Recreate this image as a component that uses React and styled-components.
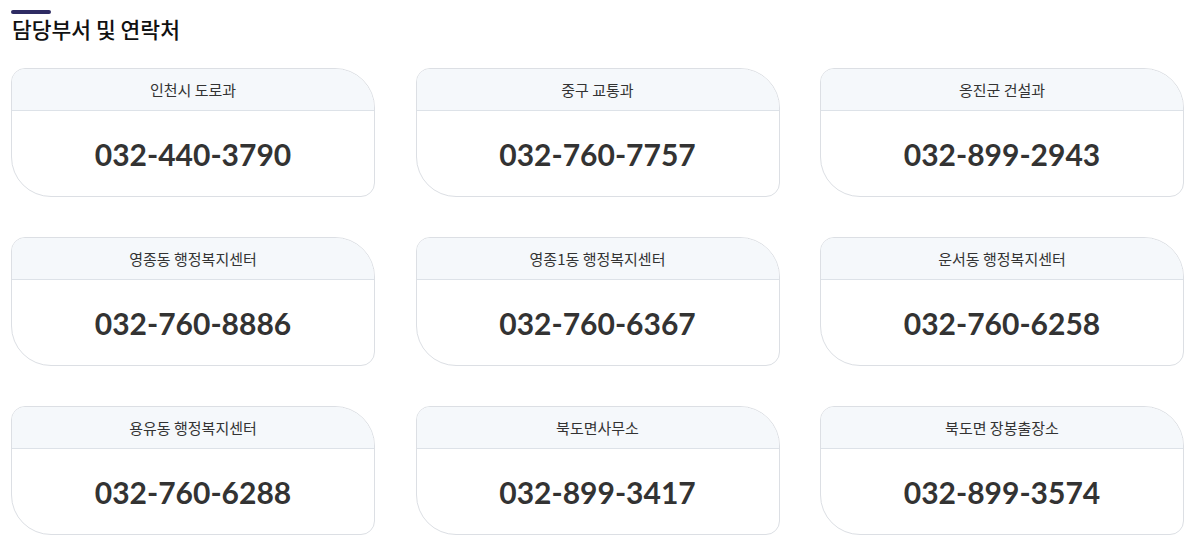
import React from 'react';
import styled, { createGlobalStyle } from 'styled-components';

const GlobalStyle = createGlobalStyle`
  body {
    margin: 0;
    background: #ffffff;
    font-family: Lato, 'Noto Sans CJK KR', sans-serif;
    color: #333333;
  }
`;

const Page = styled.div`
  padding: 10px 11px;
  width: 1173px;
`;

const TitleBar = styled.div`
  width: 40px;
  height: 4px;
  border-radius: 2px;
  background: #2e2b63;
`;

const Title = styled.h2`
  margin: 0 0 0 1px;
  font-family: 'Noto Sans CJK KR', sans-serif;
  font-size: 21.5px;
  font-weight: 500;
  line-height: 30px;
  color: #111111;
`;

const Grid = styled.div`
  margin-top: 24px;
  display: grid;
  grid-template-columns: repeat(3, 364px);
  column-gap: 40.5px;
  row-gap: 40px;
`;

const Card = styled.div`
  height: 129px;
  box-sizing: border-box;
  border: 1px solid #dcdfe4;
  border-radius: 14px 40px 14px 40px;
  overflow: hidden;
  display: flex;
  flex-direction: column;
  background: #ffffff;
`;

const CardHead = styled.div`
  height: 41px;
  flex-shrink: 0;
  background: #f5f8fb;
  border-bottom: 1px solid #dde2e8;
  display: flex;
  align-items: center;
  justify-content: center;
  font-family: 'Noto Sans CJK KR', sans-serif;
  font-size: 15px;
  color: #333333;
`;

const Phone = styled.div`
  flex: 1;
  display: flex;
  align-items: center;
  justify-content: center;
  font-family: Lato, sans-serif;
  font-weight: 700;
  font-size: 30px;
  color: #333333;
`;

const contacts = [
  { name: '인천시 도로과', phone: '032-440-3790' },
  { name: '중구 교통과', phone: '032-760-7757' },
  { name: '옹진군 건설과', phone: '032-899-2943' },
  { name: '영종동 행정복지센터', phone: '032-760-8886' },
  { name: '영종1동 행정복지센터', phone: '032-760-6367' },
  { name: '운서동 행정복지센터', phone: '032-760-6258' },
  { name: '용유동 행정복지센터', phone: '032-760-6288' },
  { name: '북도면사무소', phone: '032-899-3417' },
  { name: '북도면 장봉출장소', phone: '032-899-3574' },
];

const App = () => {
  return (
    <Page>
      <GlobalStyle />
      <TitleBar />
      <Title>담당부서 및 연락처</Title>
      <Grid>
        {contacts.map((c) => (
          <Card key={c.name}>
            <CardHead>{c.name}</CardHead>
            <Phone>{c.phone}</Phone>
          </Card>
        ))}
      </Grid>
    </Page>
  );
};

export default App;
